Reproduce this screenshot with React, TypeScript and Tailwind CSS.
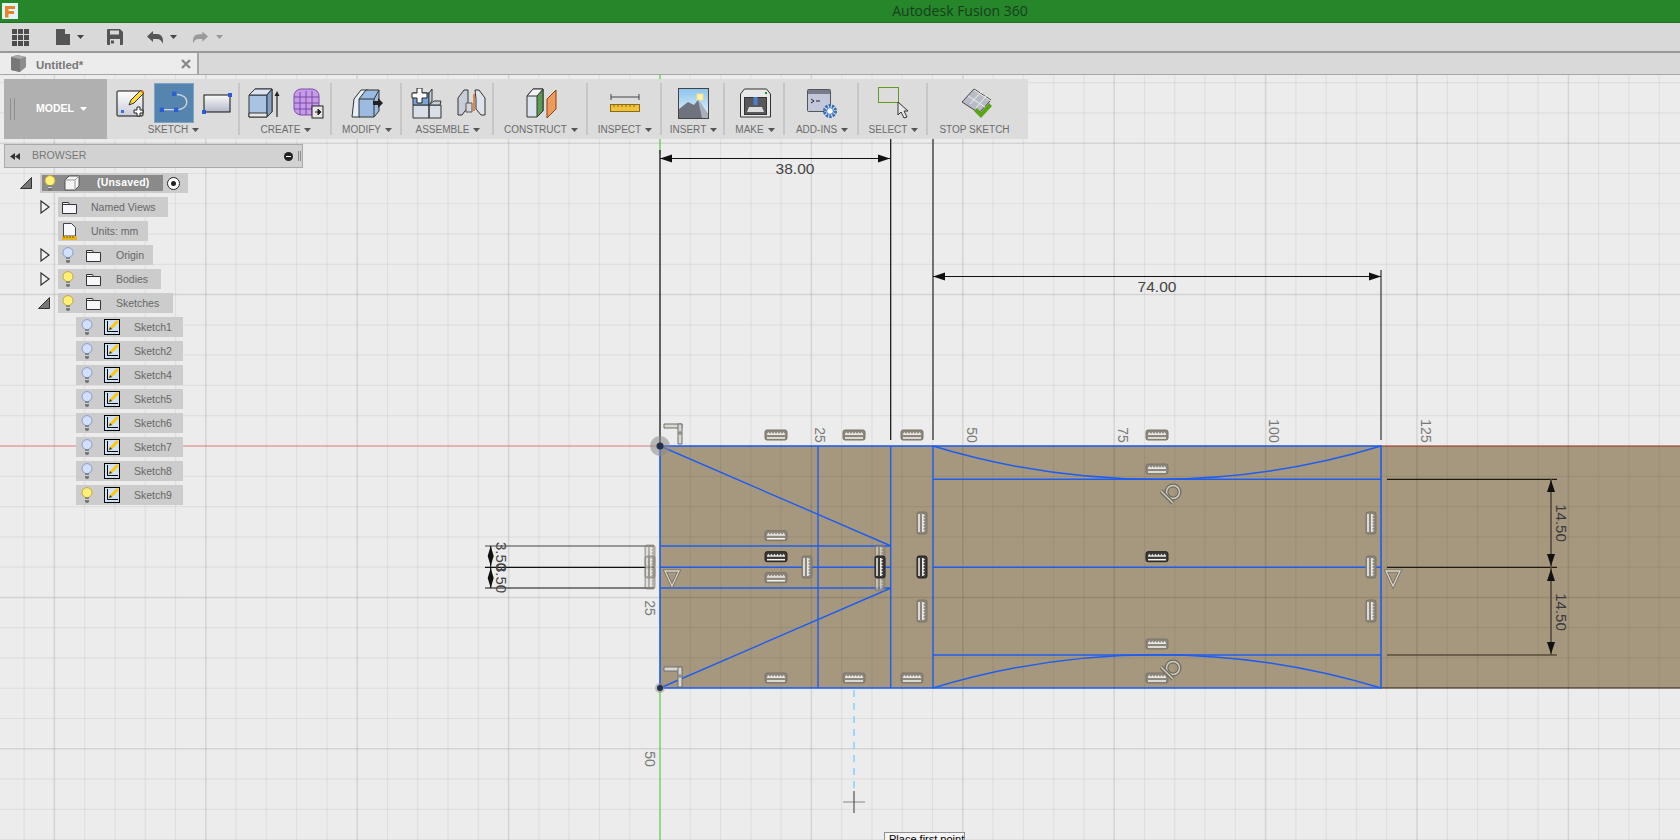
import React from "react";

const OX = 660;
const OY = 446;
const STEP = 30.28;
const BLUE = "#1f5cf0";

const xLines: { p: number; major: boolean }[] = [];
for (let k = -21; k <= 34; k++) xLines.push({ p: OX + k * STEP, major: k % 5 === 0 });
const yLines: { p: number; major: boolean }[] = [];
for (let k = -12; k <= 13; k++) yLines.push({ p: OY + k * STEP, major: k % 5 === 0 });

const Caret = ({ color = "#555" }: { color?: string }) => (
  <svg width="7" height="4" viewBox="0 0 7 4" className="shrink-0">
    <path d="M0 0h7L3.5 4z" fill={color} />
  </svg>
);

const Bulb = ({ on }: { on?: boolean }) => (
  <svg width="12" height="17" viewBox="0 0 12 17" className="shrink-0">
    <circle cx="6" cy="5.6" r="5" fill={on ? "#fff07a" : "#d4e0fa"} stroke={on ? "#c2a63a" : "#7f9dd2"} />
    <path d="M4 10.5h4v4l-1 1.500H5l-1-1.500z" fill="#777" />
    <path d="M4 12.4h4" stroke="#ddd" />
  </svg>
);

const Folder = () => (
  <svg width="15" height="13" viewBox="0 0 15 13" className="shrink-0">
    <path d="M.5 12.5v-11h6l1 2h7v9z" fill="#f6f8fb" stroke="#333" />
    <path d="M.5 3.5h7" stroke="#333" />
  </svg>
);

const TreeArrow = () => (
  <svg width="10" height="14" viewBox="0 0 10 14" className="shrink-0">
    <path d="M1 1l8 6-8 6z" fill="#f2f2f2" stroke="#333" strokeWidth="1.2" />
  </svg>
);

const TreeOpen = () => (
  <svg width="12" height="12" viewBox="0 0 12 12" className="shrink-0">
    <path d="M11.5 .5v11H.5z" fill="#777" stroke="#333" />
  </svg>
);

const SketchIcon = () => (
  <svg width="16" height="16" viewBox="0 0 16 16" className="shrink-0">
    <rect x=".5" y=".5" width="15" height="15" fill="#cfe2f5" stroke="#000" />
    <path d="M3.5 2v10.5H14" fill="none" stroke="#000" />
    <path d="M5 11l1-3 7-7 2 2-7 7z" fill="#ffc800" />
    <path d="M5 11l1-3 2 2z" fill="#333" />
  </svg>
);

const RowLabel = ({ children, left }: { children: React.ReactNode; left: number }) => (
  <span className="text-[10.5px] leading-none text-[#666] whitespace-nowrap" style={{ marginLeft: left }}>
    {children}
  </span>
);

const sketches = ["Sketch1", "Sketch2", "Sketch4", "Sketch5", "Sketch6", "Sketch7", "Sketch8", "Sketch9"];

const Browser = () => (
  <div className="ml-1 mt-[5px] w-[299px]">
    <div className="h-6 bg-[#d2d2d2] border border-[#a9a9a9] flex items-center pl-[5px] pr-[1px]">
      <svg width="10" height="7" viewBox="0 0 10 7">
        <path d="M5 0v7L0 3.5zM10 0v7L5 3.5z" fill="#333" />
      </svg>
      <span className="ml-3 text-[10.5px] text-[#777]">BROWSER</span>
      <div className="ml-auto w-[9px] h-[9px] rounded-full bg-[#222] flex items-center justify-center">
        <div className="w-[5px] h-[1px] bg-white" />
      </div>
      <div className="ml-[5px] w-[3px] h-[10px] border-x border-[#888]" />
    </div>
    <div className="mt-[5px] flex flex-col gap-1">
      <div className="h-5 flex items-center pl-4">
        <TreeOpen />
        <div className="ml-2 w-[148px] h-5 bg-[#cccccc] flex items-center pl-[2px]">
          <div className="w-[121px] h-4 bg-[#8a8a8a] flex items-center pl-[2px]">
            <Bulb on />
            <svg width="16" height="16" viewBox="0 0 16 16" className="ml-[8px]">
              <path d="M1 5l4-4h10v10l-4 4H1z" fill="#f4f4f4" stroke="#555" />
              <path d="M1 5h10v10M11 5l4-4" fill="none" stroke="#999" />
            </svg>
            <span className="ml-[17px] text-[10.5px] font-bold text-white tracking-[0.2px]">(Unsaved)</span>
          </div>
          <div className="ml-[4px] w-[13px] h-[13px] rounded-full border border-[#222] bg-white flex items-center justify-center">
            <div className="w-[5px] h-[5px] rounded-full bg-[#222]" />
          </div>
        </div>
      </div>
      <div className="h-5 flex items-center pl-9">
        <TreeArrow />
        <div className="ml-2 w-[110px] h-5 bg-[#cccccc] flex items-center pl-1">
          <Folder />
          <RowLabel left={14}>Named Views</RowLabel>
        </div>
      </div>
      <div className="h-5 flex items-center pl-[54px]">
        <div className="w-[90px] h-5 bg-[#cccccc] flex items-center pl-1">
          <svg width="15" height="17" viewBox="0 0 15 17" className="shrink-0">
            <path d="M1.5 13V.5h8l4 4V13z" fill="#f6f8fb" stroke="#444" />
            <rect x="0" y="13" width="15" height="4" fill="#e6b422" />
            <path d="M2 13v2M5 13v2M8 13v2M11 13v2" stroke="#7a5c00" />
          </svg>
          <RowLabel left={14}>Units: mm</RowLabel>
        </div>
      </div>
      {[
        { name: "Origin", w: 95, arrow: true, on: false },
        { name: "Bodies", w: 103, arrow: true, on: true },
        { name: "Sketches", w: 115, arrow: false, on: true },
      ].map((r) => (
        <div key={r.name} className="h-5 flex items-center pl-[34px]">
          <div className="w-[12px] flex justify-end">{r.arrow ? <TreeArrow /> : <TreeOpen />}</div>
          <div className="ml-2 h-5 bg-[#cccccc] flex items-center pl-[4px]" style={{ width: r.w }}>
            <Bulb on={r.on} />
            <div className="ml-[12px]">
              <Folder />
            </div>
            <RowLabel left={15}>{r.name}</RowLabel>
          </div>
        </div>
      ))}
      {sketches.map((s) => (
        <div key={s} className="h-5 ml-[72px] w-[107px] bg-[#cccccc] flex items-center pl-[5px]">
          <Bulb on={s === "Sketch9"} />
          <div className="ml-[11px]">
            <SketchIcon />
          </div>
          <RowLabel left={14}>{s}</RowLabel>
        </div>
      ))}
    </div>
  </div>
);

const IconNewSketch = () => (
  <svg width="30" height="31" viewBox="0 0 30 31">
    <defs>
      <linearGradient id="ns" x1="0" y1="0" x2="0" y2="1">
        <stop offset="0" stopColor="#fff" />
        <stop offset="1" stopColor="#c9ccd6" />
      </linearGradient>
    </defs>
    <rect x="1" y="3" width="26" height="25" rx="1" fill="url(#ns)" stroke="#111" />
    <rect x="5" y="22" width="3" height="3" fill="#3a6fd8" />
    <path d="M13 17l2-5 10-10 3 3-10 10z" fill="#ffd83a" stroke="#333" />
    <path d="M24 3l3 3 1-2-2-2z" fill="#d9702a" />
    <path d="M21 19h3v3h3v3h-3v3h-3v-3h-3v-3h3z" fill="#fff" stroke="#222" />
  </svg>
);

const IconSpline = () => (
  <svg width="40" height="40" viewBox="0 0 40 40" className="block">
    <path d="M7 27h16c14 0 14-16 0-16" fill="none" stroke="#d0d4dc" strokeWidth="1.5" />
    <rect x="18" y="8" width="4.5" height="4.5" fill="#2a5cd4" />
    <rect x="5" y="25" width="4.5" height="4.5" fill="#2a5cd4" />
    <rect x="20" y="25" width="4.5" height="4.5" fill="#2a5cd4" />
  </svg>
);

const IconRect = () => (
  <svg width="30" height="21" viewBox="0 0 30 21">
    <defs>
      <linearGradient id="rc" x1="0" y1="0" x2="0" y2="1">
        <stop offset="0" stopColor="#fbfbfb" />
        <stop offset="1" stopColor="#b4b8c6" />
      </linearGradient>
    </defs>
    <rect x="2" y="2" width="26" height="17" fill="url(#rc)" stroke="#111" />
    <rect x="26" y="0" width="4" height="4" fill="#2a5cd4" />
    <rect x="0" y="17" width="4" height="4" fill="#2a5cd4" />
  </svg>
);

const IconExtrude = () => (
  <svg width="32" height="31" viewBox="0 0 32 31">
    <path d="M1 7l6-6h17v23l-5 5H1z" fill="#a9c4e2" stroke="#333" />
    <path d="M1 7h18v22M19 7l5-6" fill="none" stroke="#333" />
    <path d="M7 1h17l-5 6H1z" fill="#d8e4f2" stroke="#333" />
    <path d="M19 7l5-6v23l-5 5z" fill="#7f9fc4" stroke="#333" />
    <path d="M1 25h18v4H1z" fill="#e8e8e8" stroke="#333" />
    <path d="M29 29V6" stroke="#222" strokeWidth="1.2" />
    <path d="M26.5 8L29 3l2.5 5z" fill="#222" />
  </svg>
);

const IconForm = () => (
  <svg width="31" height="31" viewBox="0 0 31 31">
    <rect x="1" y="1" width="25" height="26" rx="7" fill="#c79be8" stroke="#7b4ba8" />
    <path d="M1 9h25M1 15h25M1 21h25M7 4v23M13 3v24M19 3v24" stroke="#7b4ba8" />
    <rect x="19" y="18" width="11" height="12" fill="#e6e6e6" stroke="#222" />
    <path d="M22 24h4M25 21l3 3-3 3z" fill="#222" stroke="#222" />
  </svg>
);

const IconModify = () => (
  <svg width="32" height="31" viewBox="0 0 32 31">
    <path d="M1 29L3 11l7-9h7L9 11v18z" fill="#e8eef6" stroke="#333" />
    <path d="M8 11l7-9h13v21l-5 6H8z" fill="#9bbbe0" stroke="#333" />
    <path d="M8 11h15v18M23 11l5-9" fill="none" stroke="#333" />
    <path d="M22 13h5v-3l5 5-5 5v-3h-5z" fill="#222" />
  </svg>
);

const IconAssemble = () => (
  <svg width="31" height="31" viewBox="0 0 31 31">
    <path d="M2 17h16v13H2zM18 17h12v13H18z" fill="#d9dfe6" stroke="#333" />
    <path d="M2 5h16v12H2z" fill="#7aa4d6" stroke="#333" />
    <path d="M18 5l3-4v12l-3 4zM18 17l5-4h7l-1 4z" fill="#c4d0de" stroke="#333" />
    <path d="M6 0h5v5h5v5h-5v5H6v-5H1V5h5z" fill="#fff" stroke="#222" />
  </svg>
);

const IconJoint = () => (
  <svg width="29" height="29" viewBox="0 0 29 29">
    <path d="M1 26V9l6-8h4v17l-6 8z" fill="#c8ced8" stroke="#333" />
    <path d="M28 26V9l-6-8h-4l1 9v10l5 6z" fill="#dfe4ea" stroke="#333" />
    <path d="M17 5v17" stroke="#e46b1a" strokeWidth="1.5" />
    <path d="M9 14h6v9H9z" fill="#d6d6d6" stroke="#555" />
  </svg>
);

const IconConstruct = () => (
  <svg width="31" height="30" viewBox="0 0 31 30">
    <path d="M1 8l6-7h10v22l-6 6H1z" fill="#dde3ec" stroke="#333" />
    <path d="M11 8l6-7v22l-6 6z" fill="#5d9a52" stroke="#333" />
    <path d="M1 8h10l6-7H7z" fill="#f2f4f7" stroke="#333" />
    <path d="M21 11l9-9v19l-9 9z" fill="#ef9a5c" stroke="#8a3f10" />
  </svg>
);

const IconInspect = () => (
  <svg width="30" height="18" viewBox="0 0 30 18">
    <path d="M1 3h28M1 0v6M29 0v6" stroke="#444" />
    <rect x=".5" y="10.5" width="29" height="7" fill="#efc13c" stroke="#8a6b10" />
    <path d="M4 11v2M8 11v2M12 11v2M16 11v2M20 11v2M24 11v2" stroke="#8a6b10" />
  </svg>
);

const IconInsert = () => (
  <svg width="31" height="31" viewBox="0 0 31 31">
    <defs>
      <linearGradient id="sk" x1="0" y1="0" x2="0" y2="1">
        <stop offset="0" stopColor="#8cc4ee" />
        <stop offset="1" stopColor="#eaf4fb" />
      </linearGradient>
    </defs>
    <rect x=".5" y=".5" width="30" height="30" fill="url(#sk)" stroke="#444" />
    <rect x="19" y="6" width="6" height="6" fill="#fff3b0" stroke="#f6e27a" />
    <path d="M1 30V21l9-7 6 3 4-5 10 14v4z" fill="#6e737d" />
    <path d="M20 12l10 14v4h-6z" fill="#aab0ba" />
  </svg>
);

const IconMake = () => (
  <svg width="31" height="30" viewBox="0 0 31 30">
    <path d="M.5 6l4-5h22l4 5v23H.5z" fill="#e8e8e8" stroke="#333" />
    <rect x="4.5" y="9.5" width="22" height="17" fill="#58585c" stroke="#333" />
    <path d="M7 24l2-5h13l2 5z" fill="#dcdcdc" />
    <rect x="13.5" y="9" width="4" height="8" fill="#4a7fd0" />
    <rect x="25" y="4" width="2" height="2" fill="#1f8f2a" />
  </svg>
);

const IconAddIns = () => (
  <svg width="31" height="31" viewBox="0 0 31 31">
    <rect x=".5" y="1.5" width="23" height="22" rx="1" fill="#c2c8da" stroke="#555" />
    <rect x="1" y="2" width="22" height="4" fill="#777c8a" />
    <path d="M4 11l3 2-3 2M9 13h4" fill="none" stroke="#222" />
    <circle cx="23" cy="23" r="5.5" fill="#fff" stroke="#3a6fb8" strokeWidth="3" strokeDasharray="2.4 1" />
    <circle cx="23" cy="23" r="3.4" fill="#fff" stroke="#3a6fb8" />
  </svg>
);

const IconSelect = () => (
  <svg width="31" height="32" viewBox="0 0 31 32">
    <rect x=".5" y=".5" width="20" height="15" fill="none" stroke="#5d9e1f" />
    <path d="M20 15v13l3-3 3 6 3-1-3-6h4z" fill="#e8e8e8" stroke="#333" />
  </svg>
);

const IconStop = () => (
  <svg width="31" height="30" viewBox="0 0 31 30">
    <path d="M0 14L12 1l17 11-12 13z" fill="#b8bcc4" stroke="#444" />
    <path d="M6 8l17 11M12 2l17 11M8 16L20 3M14 20L25 7" stroke="#f0f0f0" />
    <path d="M12 23l3-3 4 4 8-9 3 3-11 12z" fill="#5aa516" />
  </svg>
);

const groups: { label: string; w: number; caret: boolean; icons: React.ReactNode; gap: number }[] = [
  {
    label: "SKETCH",
    w: 133,
    caret: true,
    gap: 8,
    icons: (
      <>
        <IconNewSketch />
        <div className="w-10 h-10 bg-[#5585ae] border border-[#7fa3c4] flex items-center justify-center">
          <IconSpline />
        </div>
        <IconRect />
      </>
    ),
  },
  {
    label: "CREATE",
    w: 92,
    caret: true,
    gap: 13,
    icons: (
      <>
        <IconExtrude />
        <IconForm />
      </>
    ),
  },
  { label: "MODIFY", w: 70, caret: true, gap: 0, icons: <IconModify /> },
  {
    label: "ASSEMBLE",
    w: 92,
    caret: true,
    gap: 15,
    icons: (
      <>
        <IconAssemble />
        <IconJoint />
      </>
    ),
  },
  { label: "CONSTRUCT", w: 94, caret: true, gap: 0, icons: <IconConstruct /> },
  { label: "INSPECT", w: 74, caret: true, gap: 0, icons: <IconInspect /> },
  { label: "INSERT", w: 63, caret: true, gap: 0, icons: <IconInsert /> },
  { label: "MAKE", w: 60, caret: true, gap: 0, icons: <IconMake /> },
  { label: "ADD-INS", w: 74, caret: true, gap: 0, icons: <IconAddIns /> },
  { label: "SELECT", w: 69, caret: true, gap: 0, icons: <IconSelect /> },
  { label: "STOP SKETCH", w: 99, caret: false, gap: 0, icons: <IconStop /> },
];

const Toolbar = () => (
  <div className="ml-1 mt-1 w-[1024px] h-[60px] bg-[#dcdcdc] flex">
    <div className="w-[103px] h-full bg-[#b0b0b0] flex items-center pl-[6px]">
      <div className="w-[5px] h-[22px] border-x border-[#8f8f8f]" />
      <span className="ml-[21px] text-[10.5px] font-bold text-white">MODEL</span>
      <div className="ml-[6px]">
        <Caret color="#fff" />
      </div>
    </div>
    {groups.map((g, i) => (
      <div key={g.label} className="relative flex flex-col items-center shrink-0" style={{ width: g.w }}>
        <div className="h-12 flex items-center justify-center" style={{ gap: g.gap }}>
          {g.icons}
        </div>
        <div className={`-mt-[2px] flex items-center gap-1 text-[10px] leading-none text-[#6b6b6b] whitespace-nowrap ${g.caret ? "" : "mr-[6px]"}`}>
          {g.label}
          {g.caret && <Caret />}
        </div>
        {i < groups.length - 1 && <div className="absolute right-0 top-1 bottom-1 w-[2px] bg-[#c6c6c6]" />}
      </div>
    ))}
  </div>
);

const RulerMark = ({ x, y, v, dark, dim }: { x: number; y: number; v?: boolean; dark?: boolean; dim?: boolean }) => (
  <g transform={`translate(${x} ${y})${v ? " rotate(90)" : ""}`} opacity={dim ? 0.6 : 1}>
    <rect x="-11" y="-5" width="22" height="10" rx="2" fill={dark ? "#3d3a36" : "#8d877b"} stroke={dark ? "#222" : "#7a7468"} />
    <path d="M-9 3h18" stroke="#f4f4f4" strokeWidth="1.5" />
    <path d="M-9-1l1.500-2 1.500 2 1.500-2 1.500 2 1.500-2 1.500 2 1.500-2 1.500 2 1.500-2 1.500 2 1.500-2 1.500 2v1H-9z" fill="#e8e8e8" />
  </g>
);

const Perp = ({ x, y }: { x: number; y: number }) => (
  <g transform={`translate(${x} ${y})`} fill="#d8d8d0" stroke="#6e6e6e">
    <path d="M-8-10h18v4H-8z" />
    <path d="M6-10h4v20H6z" />
    <circle cx="8" cy="-1" r="1.2" />
  </g>
);

const Tri = ({ x, y }: { x: number; y: number }) => (
  <g fill="none">
    <path d={`M${x - 7} ${y - 7}h14l-7 15z`} stroke="#77715f" strokeWidth="3" />
    <path d={`M${x - 7} ${y - 7}h14l-7 15z`} stroke="#d8d6cf" strokeWidth="1.3" />
  </g>
);

const Tangent = ({ x, y }: { x: number; y: number }) => (
  <g transform={`translate(${x} ${y})`} fill="none" stroke="#cfccc2" strokeWidth="1.5">
    <circle cx="3" cy="-2" r="6.5" stroke="#6e6a5c" strokeWidth="4" />
    <circle cx="3" cy="-2" r="6.5" />
    <path d="M-9-3L3 9" stroke="#6e6a5c" strokeWidth="4" />
    <path d="M-9-3L3 9" />
  </g>
);

const Rot = ({ x, y, children, color = "#7a7a7a", size = 14 }: { x: number; y: number; children: string; color?: string; size?: number }) => (
  <text x="0" y="0" transform={`translate(${x} ${y}) rotate(90)`} textAnchor="middle" dominantBaseline="central" fontSize={size} fill={color}>
    {children}
  </text>
);

const Viewport = () => (
  <svg className="absolute inset-0" width="1680" height="765" viewBox="0 75 1680 765">
    <rect x="0" y="75" width="1680" height="765" fill="#ececec" />
    <rect x={OX} y={OY} width={1680 - OX} height={688 - OY} fill="#a6987e" />
    {xLines.map((l) => (
      <line key={l.p} x1={l.p} y1="75" x2={l.p} y2="840" stroke="#000" strokeOpacity={l.major ? 0.1 : 0.055} strokeWidth={l.major ? 1.5 : 1.2} />
    ))}
    {yLines.map((l) => (
      <line key={l.p} x1="0" y1={l.p} x2="1680" y2={l.p} stroke="#000" strokeOpacity={l.major ? 0.1 : 0.055} strokeWidth={l.major ? 1.5 : 1.2} />
    ))}

    <line x1="0" y1={OY} x2={OX} y2={OY} stroke="#ee8a8a" strokeWidth="1.2" />
    <line x1="1381" y1={OY} x2="1680" y2={OY} stroke="#a33a2a" strokeWidth="1.2" />
    <line x1="1381" y1="688" x2="1680" y2="688" stroke="#2a1c12" strokeWidth="1.2" />
    <line x1={OX} y1="75" x2={OX} y2="154" stroke="#5fd84f" strokeWidth="1.2" />
    <line x1={OX} y1="688" x2={OX} y2="840" stroke="#5fd84f" strokeWidth="1.2" />

    {/* dimensions */}
    <g stroke="#111" strokeWidth="1.2" fill="none">
      <line x1={OX} y1="150" x2={OX} y2="446" />
      <line x1="890.7" y1="139" x2="890.7" y2="440" />
      <line x1="933" y1="139" x2="933" y2="440" stroke="#555" strokeWidth="1.6" />
      <line x1="1381" y1="270" x2="1381" y2="440" stroke="#333" />
      <line x1={OX} y1="158.5" x2="890" y2="158.5" />
      <line x1="933" y1="276.5" x2="1381" y2="276.5" />
      <line x1="1387" y1="479.3" x2="1557" y2="479.3" stroke="#221a10" />
      <line x1="1387" y1="567.3" x2="1557" y2="567.3" stroke="#221a10" />
      <line x1="1387" y1="655" x2="1557" y2="655" stroke="#5a4c38" strokeWidth="1.5" />
      <line x1="1551" y1="479" x2="1551" y2="655" stroke="#544a3a" strokeWidth="1.6" />
      <line x1="485" y1="546" x2="654" y2="546" stroke="#444" />
      <line x1="485" y1="567.3" x2="654" y2="567.3" />
      <line x1="485" y1="588" x2="654" y2="588" />
      <line x1="490.7" y1="546" x2="490.7" y2="588" />
    </g>
    <g fill="#111">
      <path d="M660 158.500l12-4v8zM890 158.500l-12-4v8zM933 276.500l12-4v8zM1381 276.500l-12-4v8z" />
      <path d="M1551 480l-4 12h8zM1551 566l-4-12h8zM1551 569l-4 12h8zM1551 654l-4-12h8z" />
      <path d="M490.7 546l-3 10 3 10 3-10zM490.7 568l-3 10 3 10 3-10z" />
    </g>
    <g textAnchor="middle" fontSize="15.5" fill="#444">
      <text x="795" y="174">38.00</text>
      <text x="1157" y="292">74.00</text>
    </g>
    <Rot x={501} y={556.5} color="#444" size={15}>3.50</Rot>
    <Rot x={501} y={578.5} color="#444" size={15}>3.50</Rot>
    <Rot x={1561} y={523} color="#3a3a3a" size={15}>14.50</Rot>
    <Rot x={1561} y={612} color="#3a3a3a" size={15}>14.50</Rot>

    {/* axis numbers */}
    <Rot x={820} y={435}>25</Rot>
    <Rot x={972} y={435}>50</Rot>
    <Rot x={1123} y={435}>75</Rot>
    <Rot x={1274} y={431}>100</Rot>
    <Rot x={1426} y={431}>125</Rot>
    <Rot x={650} y={608}>25</Rot>
    <Rot x={650} y={759}>50</Rot>

    {/* sketch curves */}
    <g stroke={BLUE} strokeWidth="1.4" fill="none">
      <path d={`M${OX} ${OY}H1381V688H${OX}Z`} strokeWidth="1.6" />
      <path d="M818 446V688M890.7 446V688M933 446V688" />
      <path d={`M${OX} 546H891M${OX} 567.3H891M${OX} 588H891`} />
      <path d={`M${OX} ${OY}L891 546M${OX} 688L891 588`} />
      <path d="M933 479.3H1381M933 567.3H1381M933 655H1381" />
      <path d="M933 446A770 770 0 0 0 1381 446M933 688A770 770 0 0 1 1381 688" />
    </g>

    {/* constraint glyphs */}
    {[776, 854, 912, 1157].map((x) => (
      <React.Fragment key={x}>
        <RulerMark x={x} y={435} />
        <RulerMark x={x} y={678} />
      </React.Fragment>
    ))}
    <RulerMark x={1157} y={469} />
    <RulerMark x={1157} y={644} />
    <RulerMark x={776} y={535.7} />
    <RulerMark x={776} y={556.7} dark />
    <RulerMark x={776} y={577.7} />
    <RulerMark x={1157} y={556.7} dark />
    <RulerMark x={807} y={567} v />
    <RulerMark x={880} y={556} v dim />
    <RulerMark x={880} y={580} v dim />
    <RulerMark x={880} y={567} v dark />
    <RulerMark x={922} y={523} v />
    <RulerMark x={922} y={567} v dark />
    <RulerMark x={922} y={611} v />
    <RulerMark x={1371} y={523} v />
    <RulerMark x={1371} y={567} v />
    <RulerMark x={1371} y={611} v />
    <RulerMark x={650} y={556} v dim />
    <RulerMark x={650} y={578} v dim />
    <RulerMark x={650} y={567} v dim />
    <Perp x={672} y={434} />
    <Perp x={672} y={677} />
    <Tri x={672} y={578} />
    <Tri x={1393} y={578} />
    <Tangent x={1170} y={494} />
    <Tangent x={1170} y={670} />

    {/* points */}
    <circle cx={OX} cy={OY} r="10" fill="#8a8a8a" fillOpacity="0.55" />
    <circle cx={OX} cy={OY} r="3.5" fill="#22304a" />
    <circle cx={OX} cy="688" r="5" fill="#8a8a8a" fillOpacity="0.5" />
    <circle cx={OX} cy="688" r="3" fill="#22304a" />

    {/* cursor */}
    <line x1="854" y1="690" x2="854" y2="791" stroke="#66ccff" strokeWidth="1.2" strokeDasharray="7 6" />
    <line x1="843" y1="802" x2="865" y2="802" stroke="#a8a8a8" strokeWidth="1.5" />
    <line x1="854" y1="791" x2="854" y2="813" stroke="#555" strokeWidth="1.2" />
  </svg>
);

export default function App() {
  return (
    <div className="w-[1680px] h-[840px] overflow-hidden flex flex-col font-['Liberation_Sans',Arial,sans-serif]">
      <div className="h-[23px] shrink-0 bg-[#25862a] border-b border-[#1e7023] relative flex items-center justify-center pl-[240px]">
        <div className="absolute left-[2px] top-[3px] w-4 h-4 bg-[#e3f2f8] flex items-center justify-center">
          <svg width="12" height="13" viewBox="0 0 12 13">
            <path d="M1 1h10v3H4.500v2H10v3H4.500v3.500H1z" fill="#e5852a" />
          </svg>
        </div>
        <span className="font-['Open_Sans',sans-serif] text-[14px] leading-none text-[#173f1c]">Autodesk Fusion 360</span>
      </div>

      <div className="h-[30px] shrink-0 bg-[#d9d9d9] border-b-2 border-[#999] flex items-center pl-3">
        <svg width="17" height="17" viewBox="0 0 17 17">
          <path d="M0 0h5v5H0zM6 0h5v5H6zM12 0h5v5h-5zM0 6h5v5H0zM6 6h5v5H6zM12 6h5v5h-5zM0 12h5v5H0zM6 12h5v5H6zM12 12h5v5h-5z" fill="#4d4d4d" />
        </svg>
        <svg width="14" height="16" viewBox="0 0 14 16" className="ml-[27px]">
          <path d="M0 0h9l5 5v11H0zM9 0v5h5z" fill="#555" fillRule="evenodd" />
        </svg>
        <div className="ml-[7px]">
          <Caret color="#444" />
        </div>
        <svg width="16" height="16" viewBox="0 0 16 16" className="ml-[23px]">
          <path d="M1 0h12l3 3v12a1 1 0 0 1-1 1H1a1 1 0 0 1-1-1V1a1 1 0 0 1 1-1z" fill="#555" />
          <rect x="3" y="1.5" width="9" height="4" fill="#d9d9d9" />
          <rect x="3" y="10" width="10" height="6" fill="#d9d9d9" />
          <rect x="4" y="11.5" width="3" height="3" fill="#555" />
        </svg>
        <svg width="16" height="13" viewBox="0 0 16 13" className="ml-6">
          <path d="M6 0v3h4c4 0 6 3 6 7v3c-1-3-3-5-6-5H6v3L0 5.500z" fill="#555" />
        </svg>
        <div className="ml-[7px]">
          <Caret color="#444" />
        </div>
        <svg width="15" height="13" viewBox="0 0 16 13" className="ml-4">
          <path d="M10 0v3H6C2 3 0 6 0 10v3c1-3 3-5 6-5h4v3l6-5.500z" fill="#9a9a9a" />
        </svg>
        <div className="ml-2">
          <Caret color="#999" />
        </div>
      </div>

      <div className="h-[22px] shrink-0 bg-[#d9d9d9] border-b border-[#a6a6a6] flex">
        <div className="w-[199px] h-full bg-[#ececec] border-r-2 border-[#a6a6a6] flex items-center pl-[10px] pr-[6px]">
          <svg width="17" height="17" viewBox="0 0 17 17">
            <path d="M1 2l6-2 9 2v10l-6 5-9-2z" fill="#8c8c8c" />
            <path d="M1 2l9 2v13l-9-2z" fill="#777" />
            <path d="M1 2l6-2 9 2-6 2z" fill="#a8a8a8" />
          </svg>
          <span className="ml-[9px] mt-1 text-[11.5px] font-bold text-[#777]">Untitled*</span>
          <svg width="10" height="10" viewBox="0 0 10 10" className="ml-auto">
            <path d="M1 1l8 8M9 1l-8 8" stroke="#8a8a8a" strokeWidth="2.4" />
          </svg>
        </div>
      </div>

      <div className="relative flex-1">
        <Viewport />
        <div className="relative flex flex-col">
          <Toolbar />
          <Browser />
        </div>
        <div className="absolute left-[884px] top-[757px] w-[81px] h-5 bg-[#f4f4f4] border border-[#8f8f8f] px-1 text-[11px] leading-[13px] text-black whitespace-nowrap">
          Place first point
        </div>
      </div>
    </div>
  );
}
